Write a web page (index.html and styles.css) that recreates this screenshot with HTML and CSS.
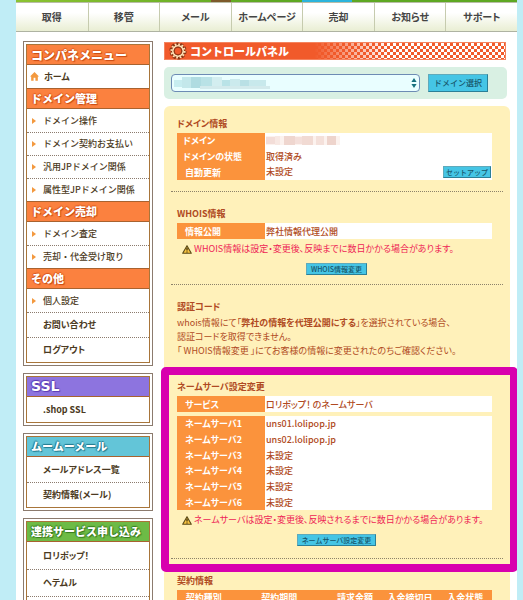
FILE: index.html
```html
<!DOCTYPE html>
<html lang="ja">
<head>
<meta charset="utf-8">
<meta name="viewport" content="width=device-width">
<title>コントロールパネル</title>
<link rel="stylesheet" href="styles.css">
</head>
<body>
<svg class="defs" aria-hidden="true">
  <symbol id="warn" viewBox="0 0 10 9"><path d="M5 .7 9.3 8.3H.7Z" fill="#f9c440" stroke="#5a4a18" stroke-width="1.1" stroke-linejoin="round"/><path d="M5 2.8v2.8M5 6.4v1.1" stroke="#332a10" stroke-width="1.2"/></symbol>
</svg>
<div class="page">
  <div class="banner"><span class="banner-brown"></span><span class="banner-blue"></span></div>
  <nav class="topnav">
    <a href="#">取得</a><a href="#">移管</a><a href="#">メール</a><a href="#">ホームページ</a><a href="#">売却</a><a href="#">お知らせ</a><a href="#">サポート</a>
  </nav>
  <div class="columns">
    <aside class="sidebar">
      <nav class="box">
        <div class="box-inner">
          <h2 class="large">コンパネメニュー</h2>
          <a class="item home" href="#"><svg viewBox="0 0 10 10"><path d="M5 0 10 5H8.7v4.6H6V6.4H4v3.2H1.3V5H0Z" fill="#f3993f"/></svg>ホーム</a>
          <h2>ドメイン管理</h2>
          <a class="item arrow" href="#">ドメイン操作</a>
          <a class="item arrow" href="#">ドメイン契約お支払い</a>
          <a class="item arrow" href="#">汎用JPドメイン関係</a>
          <a class="item arrow" href="#">属性型JPドメイン関係</a>
          <h2>ドメイン売却</h2>
          <a class="item arrow" href="#">ドメイン査定</a>
          <a class="item arrow" href="#">売却・代金受け取り</a>
          <h2>その他</h2>
          <a class="item arrow" href="#">個人設定</a>
          <a class="item plain" href="#">お問い合わせ</a>
          <a class="item plain" href="#">ログアウト</a>
        </div>
      </nav>
      <nav class="box purple">
        <div class="box-inner">
          <h2 class="latin">SSL</h2>
          <a class="item plain" href="#">.shop SSL</a>
        </div>
      </nav>
      <nav class="box teal">
        <div class="box-inner">
          <h2>ムームーメール</h2>
          <a class="item plain" href="#">メールアドレス一覧</a>
          <a class="item plain" href="#">契約情報(メール)</a>
        </div>
      </nav>
      <nav class="box green">
        <div class="box-inner">
          <h2>連携サービス申し込み</h2>
          <a class="item plain" href="#">ロリポップ！</a>
          <a class="item plain" href="#">ヘテムル</a>
          <div class="item plain"></div>
        </div>
      </nav>
    </aside>
    <main>
      <h1><svg class="gear" viewBox="0 0 20 18"><circle cx="10" cy="9" r="6.9" fill="none" stroke="#8a3413" stroke-width="3.4" stroke-dasharray="2.7 1.63"/><circle cx="10" cy="9" r="5.6" fill="#f15a2b" stroke="#8a3413" stroke-width="3.6"/><circle cx="10" cy="9" r="6.6" fill="none" stroke="#ffe3b8" stroke-width="2" stroke-dasharray="1.7 1.756"/><circle cx="10" cy="9" r="5.2" fill="none" stroke="#ffe3b8" stroke-width="1.6"/><circle cx="10" cy="9" r="3.8" fill="#f15a2b" stroke="#8a3413" stroke-width="1"/></svg><span>コントロールパネル</span></h1>
      <form class="picker">
        <div class="select-wrap">
          <select aria-label="ドメイン"><option></option></select>
          <svg class="mosaic" viewBox="0 0 98 13" aria-hidden="true"><path d="M2 4h8v7H2z" fill="#c7edf0"/><path d="M10 1h9v11h-9z" fill="#c3e8eb"/><path d="M19 1h10v11H19z" fill="#afdce1"/><path d="M29 1h11v11H29z" fill="#b9e2e6"/><path d="M40 1h10v9H40z" fill="#d3eef0"/><path d="M50 4h8v6h-8z" fill="#b9e3e7"/><path d="M58 3h10v7H58z" fill="#cbeaed"/><path d="M68 4h9v6h-9z" fill="#b9e0e5"/><path d="M77 4h17v6H77z" fill="#c8e9ec"/><path d="M28 10h70v3H28z" fill="#d3eaec"/></svg>
          <svg class="updown" viewBox="0 0 6 10" aria-hidden="true"><path d="M3 0 5.6 4H.4ZM3 10 .4 6h5.2Z" fill="#16707e"/></svg>
        </div>
        <button type="button" class="btn tall">ドメイン選択</button>
      </form>
      <div class="panel">
        <section class="domain">
          <h3>ドメイン情報</h3>
          <table class="info three">
            <tr><th scope="row" class="edge">ドメイン</th><td><svg class="redacted" viewBox="0 0 74 9" aria-hidden="true"><path d="M0 0h74v9H0z" fill="#fcf2ee"/><path d="M0 1h9v7H0z" fill="#f3ddd8"/><path d="M9 0h5v9H9z" fill="#f8e8e3"/><path d="M18 0h11v9H18z" fill="#efd6cf"/><path d="M29 1h7v7h-7z" fill="#f4dfda"/><path d="M36 0h11v9H36z" fill="#f1dad3"/><path d="M50 0h8v9h-8z" fill="#f4e0da"/><path d="M61 0h9v9h-9z" fill="#eed4cc"/></svg></td></tr>
            <tr><th scope="row" class="edge">ドメインの状態</th><td>取得済み</td></tr>
            <tr><th scope="row">自動更新</th><td class="with-button">未設定<button type="button" class="btn">セットアップ</button></td></tr>
          </table>
        </section>
        <section class="whois">
          <h3>WHOIS情報</h3>
          <table class="info one"><tr><th scope="row">情報公開</th><td>弊社情報代理公開</td></tr></table>
          <p class="warning"><svg><use href="#warn"/></svg>WHOIS情報は設定・変更後、反映までに数日かかる場合があります。</p>
          <div class="action"><button type="button" class="btn">WHOIS情報変更</button></div>
        </section>
        <section class="auth">
          <h3>認証コード</h3>
          <p>whois情報にて「<b>弊社の情報を代理公開にする</b>」を選択されている場合、<br>認証コードを取得できません。<br>「 WHOIS情報変更 」にてお客様の情報に変更されたのちご確認ください。</p>
        </section>
        <section class="nameserver">
          <h3>ネームサーバ設定変更</h3>
          <table class="info one"><tr><th scope="row">サービス</th><td>ロリポップ！ のネームサーバ</td></tr></table>
          <table class="info six">
            <tr><th scope="row">ネームサーバ1</th><td>uns01.lolipop.jp</td></tr>
            <tr><th scope="row">ネームサーバ2</th><td>uns02.lolipop.jp</td></tr>
            <tr><th scope="row">ネームサーバ3</th><td>未設定</td></tr>
            <tr><th scope="row">ネームサーバ4</th><td>未設定</td></tr>
            <tr><th scope="row">ネームサーバ5</th><td>未設定</td></tr>
            <tr><th scope="row">ネームサーバ6</th><td>未設定</td></tr>
          </table>
          <p class="warning"><svg><use href="#warn"/></svg>ネームサーバは設定・変更後、反映されるまでに数日かかる場合があります。</p>
          <div class="action"><button type="button" class="btn">ネームサーバ設定変更</button></div>
          <div class="highlight"></div>
        </section>
        <section class="contract">
          <h3>契約情報</h3>
          <table class="contracts">
            <colgroup><col class="col-kind"><col class="col-term"><col class="col-price"><col class="col-due"><col></colgroup>
            <tr><th scope="col">契約種別</th><th scope="col">契約期間</th><th scope="col">請求金額</th><th scope="col">入金締切日</th><th scope="col">入金状態</th></tr>
          </table>
        </section>
      </div>
    </main>
  </div>
</div>
</body>
</html>
```
FILE: styles.css
```css
* { box-sizing: border-box; }
body {
  margin: 0;
  background: #c0edf6;
  color: #b04a22;
  font-family: "Noto Sans CJK JP", sans-serif;
  font-size: 9px;
  line-height: 14px;
  font-feature-settings: "palt";
}
h1, h2, h3, p { margin: 0; }
a { color: inherit; text-decoration: none; }
button, select { font: inherit; font-feature-settings: inherit; }
.defs { display: none; }

.page {
  height: 100vh;
  margin: 0 6px 0 16px;
  overflow: hidden;
  background: #fff;
}
.banner {
  display: flex;
  height: 2px;
  background: linear-gradient(90deg, #8cc332, #5ea823 50%);
}
.banner-brown { width: 4%; margin-left: 39%; background: #7d5a2b; }
.banner-blue { width: 10%; margin-left: 14%; background: #2cb4dc; }
.topnav {
  display: grid;
  grid-template-columns: repeat(7, 1fr);
  height: 30px;
  border-top: 1px solid #b9bda8;
  border-bottom: 1px solid #aeb3a2;
  background: linear-gradient(#fff 35%, #e9eed3);
  color: #444;
  font-size: 10px;
  font-weight: 700;
  line-height: 28px;
  text-align: center;
}
.topnav a + a { border-left: 1px solid #c6cbae; }

.columns {
  display: grid;
  grid-template-columns: 130px minmax(0, 1fr);
  gap: 11px;
  padding: 9px 7px 0;
}
.sidebar { display: flex; flex-direction: column; gap: 7px; }
.box { padding: 2px; border: 1px solid #8c7b6e; }
.box-inner { border: 1px solid #a8753a; color: #4b3a22; }
.box h2 {
  height: 20px;
  padding-left: 4px;
  border-bottom: 1px solid #a8622f;
  background: #fb813f;
  color: #fff;
  font-size: 11px;
  font-weight: 900;
  line-height: 19px;
  white-space: nowrap;
  font-feature-settings: normal;
  text-shadow: 1px 1px 1px #c94a12, -1px 0 1px #d9581c, 0 -1px 1px #d9581c;
}
.box h2.large { font-size: 12px; }
.box h2.latin { font-family: "DejaVu Sans", sans-serif; font-size: 14px; }
.item + h2 { height: 21px; border-top: 1px solid #a8622f; }
.purple h2 { background: #8d74df; text-shadow: 1px 1px 1px #5a3cb4, -1px 0 1px #5a3cb4, 0 -1px 1px #5a3cb4; }
.teal h2 { background: #63c5d8; text-shadow: 1px 1px 1px #21798e, -1px 0 1px #21798e, 0 -1px 1px #21798e; }
.green h2 { background: #6dbb46; text-shadow: 1px 1px 1px #36791c, -1px 0 1px #36791c, 0 -1px 1px #36791c; }
.item {
  display: flex;
  align-items: center;
  height: 23px;
  padding-left: 16px;
  font-weight: 500;
  white-space: nowrap;
}
.item + .item { border-top: 1px dotted #8c7b6e; }
.home { gap: 5px; padding-left: 3px; font-weight: 700; }
.home svg { width: 9px; height: 9px; }
.arrow { gap: 7px; padding-left: 5px; font-feature-settings: normal; }
.arrow::before {
  content: "";
  border: 3px solid transparent;
  border-left: 4px solid #f3993f;
  border-right: 0;
}
.item.plain { height: 25px; font-weight: 700; }
.green .item.plain { height: 27px; }

main { display: flex; flex-direction: column; gap: 7px; }
h1 {
  display: flex;
  align-items: center;
  gap: 2px;
  height: 18px;
  margin: 1px 4px 0 0;
  padding-left: 3px;
  border: 1px solid #f4845f;
  background:
    linear-gradient(90deg, #f15a2b 44%, transparent 66%),
    repeating-conic-gradient(#f15a2b 0 25%, #fff 0 50%) 0 0 / 6px 6px;
  color: #fff;
  font-size: 11px;
  font-weight: 900;
  line-height: 16px;
  font-feature-settings: normal;
  white-space: nowrap;
}
.gear { width: 20px; height: 18px; overflow: visible; }
.picker {
  display: flex;
  align-items: center;
  gap: 8px;
  height: 32px;
  margin-right: 3px;
  padding: 0 19px 0 7px;
  border-radius: 5px;
  background: #d9f0e3;
}
.select-wrap { position: relative; flex: 1; height: 18px; }
select {
  display: block;
  width: 100%;
  height: 18px;
  border: 1px solid #6d8bb4;
  border-radius: 4px;
  background: #e9feff;
  appearance: none;
}
.mosaic { position: absolute; left: 1px; top: 2px; width: 98px; height: 13px; }
.updown { position: absolute; right: 3px; top: 4px; width: 6px; height: 10px; }
.btn {
  height: 12px;
  padding: 0 4px;
  border: 1px solid;
  border-color: #5faabb #2b7f97 #2b7f97 #5faabb;
  border-radius: 0;
  background: #45c5e5;
  color: #17566b;
  font-size: 7px;
  font-weight: 500;
  line-height: 10px;
  white-space: nowrap;
  font-feature-settings: normal;
}
.with-button .btn { padding: 0 2px; }
.btn.tall { height: 18px; padding: 0 5px; font-size: 8px; line-height: 16px; }

.panel {
  padding: 0 7px;
  border-radius: 6px 6px 0 0;
  background: #fff1ba;
}
section { padding: 0 11px 0 6px; }
h3 { height: 16px; font-size: 9px; line-height: 14px; }
table { width: 100%; border-collapse: collapse; }
.info { background: #fff; }
.info th {
  width: 88px;
  padding: 0 0 0 8px;
  background: #fb933c;
  color: #fff;
  font-weight: 700;
  text-align: left;
  line-height: 15px;
}
.info th.edge { padding-left: 6px; }
.info td { padding: 0 1px; line-height: 15px; font-weight: 500; }
.info .with-button { display: flex; align-items: center; justify-content: space-between; }
.one { height: 16px; }
.three { height: 47px; }
.six { height: 94px; margin-top: 4px; }
.redacted { display: block; width: 74px; height: 9px; }
.warning {
  display: flex;
  align-items: center;
  gap: 2px;
  padding-left: 5px;
  color: #ee2456;
  line-height: 20px;
  white-space: nowrap;
}
.warning svg { width: 10px; height: 9px; }
.action { display: flex; justify-content: center; padding: 4px 0 0 4px; }
.domain, .whois, .nameserver { border-bottom: 1px dotted #8d826a; }
.domain { height: 86px; padding-top: 11px; }
.whois { height: 93px; padding-top: 15px; }
.auth { height: 83px; padding-top: 15px; }
.nameserver { position: relative; height: 191px; padding-top: 12px; }
.highlight {
  position: absolute;
  inset: -1px -15px -14px -10px;
  border: 8px solid #d800ae;
  border-radius: 5px;
  pointer-events: none;
}
.contract { padding-top: 15px; padding-bottom: 40px; }
.contracts { table-layout: fixed; background: #fb933c; color: #fff; }
.contracts th { height: 14px; padding: 0; text-align: center; line-height: 13px; white-space: nowrap; }
.col-kind, .col-price { width: 17%; }
.col-term { width: 31%; }
.col-due { width: 18%; }
```
